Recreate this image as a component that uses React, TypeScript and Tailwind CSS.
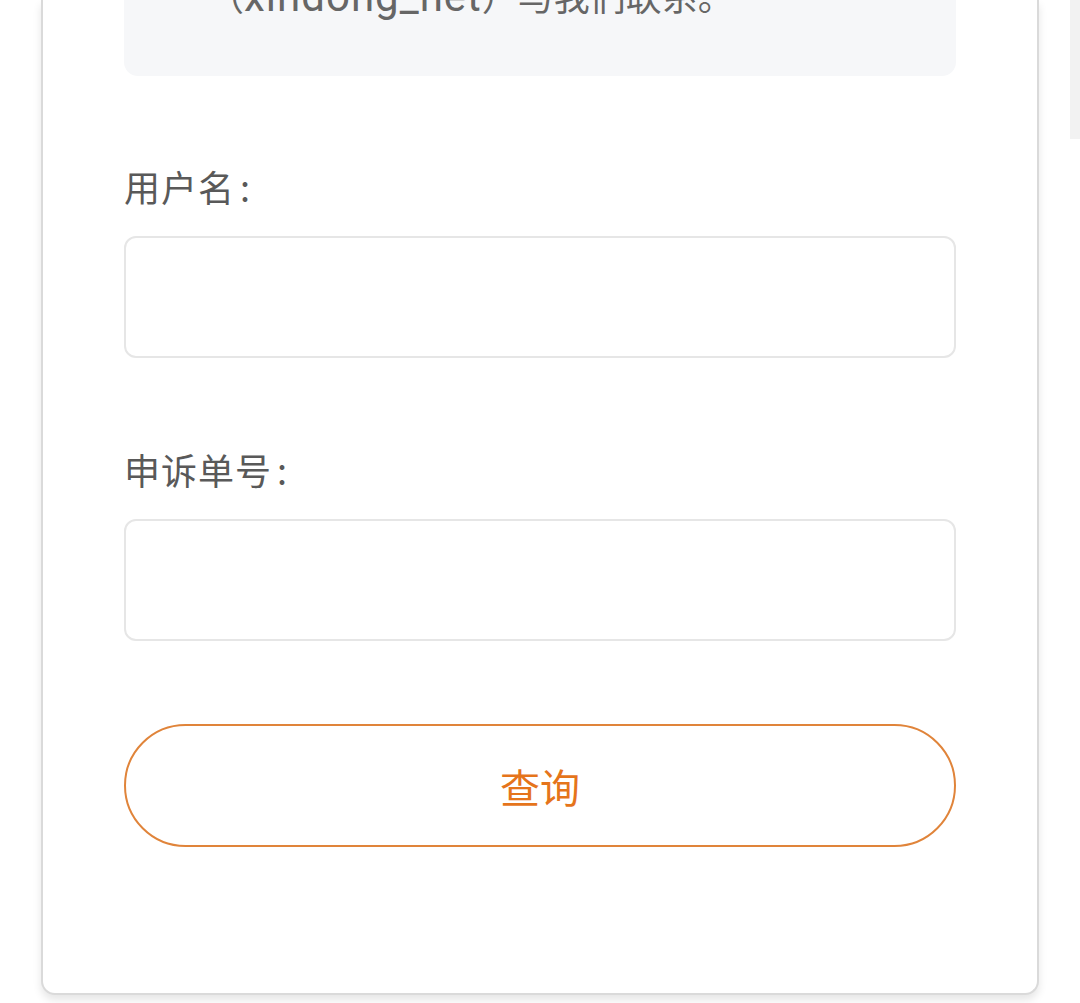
import * as React from "react";

const cjk = "font-['Noto_Sans_CJK_SC','Noto_Sans',sans-serif]";

function Field({ label }: { label: string }) {
  return (
    <div className="flex flex-col">
      <label className={`${cjk} text-[36px] leading-[36px] tracking-[1px] text-[#595959]`}>
        {label}
        <span className="pl-[5px]">:</span>
      </label>
      <input
        className="mt-[32px] h-[122px] w-full rounded-[12px] border-2 border-[#e6e6e6] bg-white px-6 text-[34px] outline-none"
        type="text"
      />
    </div>
  );
}

export default function App() {
  return (
    <div className="flex h-[1003px] w-[1080px] overflow-hidden bg-white">
      <div className="ml-[41px] flex h-[995px] w-[998px] flex-none flex-col rounded-b-[14px] border-x-2 border-b-2 border-[#dadada] bg-white px-[81px] shadow-[0_5px_8px_rgba(0,0,0,0.10)]">
        <div className="-mt-[26px] whitespace-nowrap rounded-b-[14px] bg-[#f6f7f9] pb-[52px] pl-[84px] font-['Roboto','Noto_Sans_CJK_SC',sans-serif] text-[36px] leading-[50px] text-[#666666]">
          （<span className="text-[42px] leading-none tracking-[1px]">xindong_net</span>）与我们联系。
        </div>

        <div className="mt-[92px] flex flex-col gap-[93px]">
          <Field label="用户名" />
          <Field label="申诉单号" />
        </div>

        <button
          className={`${cjk} mt-[83px] h-[123px] w-full rounded-full border-2 border-[#e0843a] text-[40px] text-[#e5741b]`}
        >
          查询
        </button>
      </div>
      <div className="ml-[31px] h-[139px] w-[10px] flex-none bg-[#f2f2f2]" />
    </div>
  );
}
